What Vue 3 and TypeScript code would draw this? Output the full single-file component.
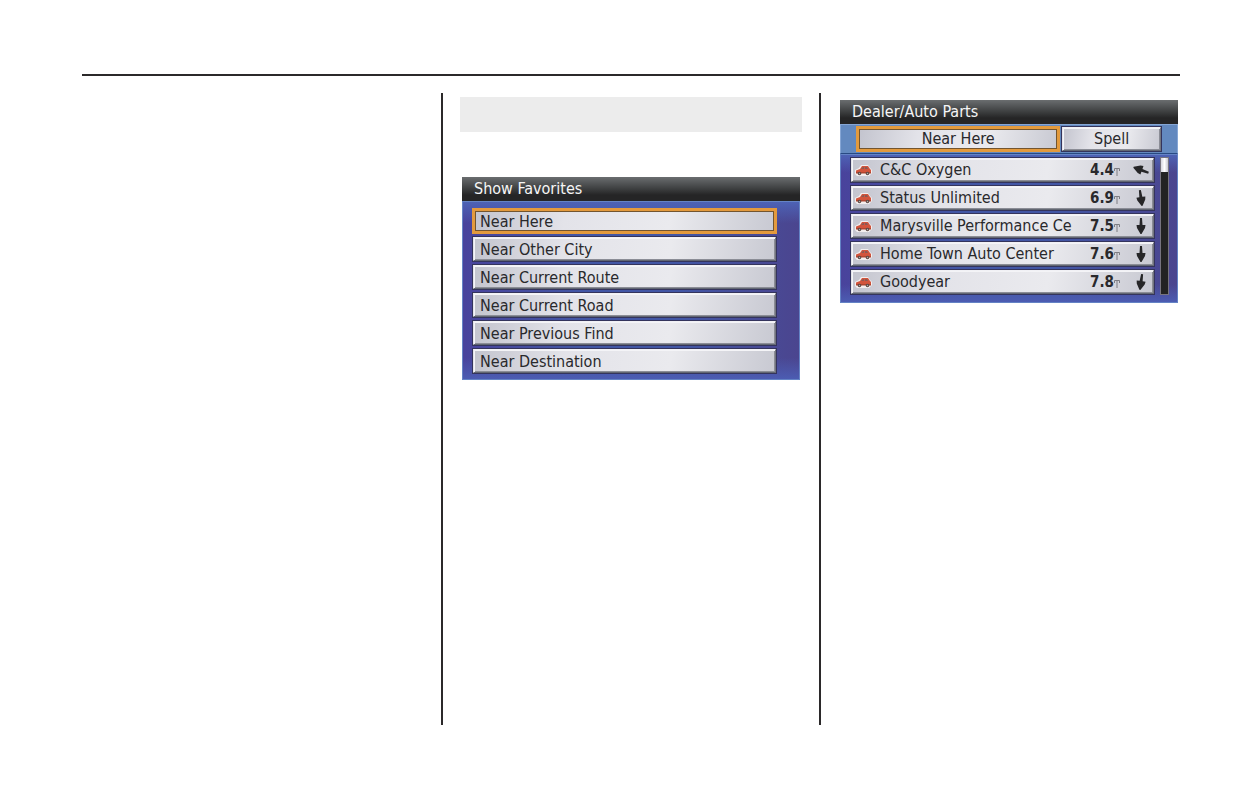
<script setup lang="ts">
interface Place {
  name: string
  distance: string
  heading: number
}

const searchAreas: string[] = [
  'Near Here',
  'Near Other City',
  'Near Current Route',
  'Near Current Road',
  'Near Previous Find',
  'Near Destination',
]

const places: Place[] = [
  { name: 'C&C Oxygen', distance: '4.4', heading: 110 },
  { name: 'Status Unlimited', distance: '6.9', heading: -8 },
  { name: 'Marysville Performance Ce', distance: '7.5', heading: 0 },
  { name: 'Home Town Auto Center', distance: '7.6', heading: 0 },
  { name: 'Goodyear', distance: '7.8', heading: 8 },
]
</script>

<template>
  <main class="page">
    <hr class="rule" />
    <div class="columns">
      <section class="column"></section>
      <section class="column middle">
        <div class="note"></div>
        <div class="screen">
          <h2 class="title">Show Favorites</h2>
          <div class="body favorites">
            <button
              v-for="(area, i) in searchAreas"
              :key="area"
              type="button"
              class="key area"
              :class="{ selected: i === 0 }"
            >{{ area }}</button>
          </div>
        </div>
      </section>
      <section class="column last">
        <div class="screen">
          <h2 class="title">Dealer/Auto Parts</h2>
          <div class="tabs">
            <button type="button" class="key tab selected">Near Here</button>
            <button type="button" class="key tab">Spell</button>
          </div>
          <div class="body results">
            <div class="list">
              <button v-for="place in places" :key="place.name" type="button" class="key place">
                <svg class="car" viewBox="0 0 17 11" aria-hidden="true">
                  <path d="M0 5L4 3L6 0H13L15 3L17 5V8L14 11H2L0 9Z" fill="#f3eeee" />
                  <path d="M1 5.5L5 4L7 1H13L15 4L16 5V8H1Z" fill="#d2543c" />
                  <path d="M6 4L8 2H9V4ZM10 2H12L13 4H10Z" fill="#8a5a55" />
                  <path d="M1 7H16V8.5H1Z" fill="#b0452f" />
                  <circle cx="4.5" cy="8.5" r="1.8" fill="#5c4a46" />
                  <circle cx="12.5" cy="8.5" r="1.8" fill="#5c4a46" />
                  <circle cx="4.5" cy="8.5" r="0.7" fill="#b9aaa6" />
                  <circle cx="12.5" cy="8.5" r="0.7" fill="#b9aaa6" />
                </svg>
                <span class="name">{{ place.name }}</span>
                <span class="distance">{{ place.distance }}</span>
                <svg class="unit" viewBox="0 0 6 8" aria-hidden="true">
                  <path d="M0.5 3V0.5H5.5V3M3 0.5V8" fill="none" stroke="#7c7c82" />
                </svg>
                <svg class="arrow" viewBox="0 0 18 18" aria-hidden="true">
                  <path
                    d="M8 1H10L10.5 8H13.5L13 11L9.5 17H8.5L5 11L4.5 8H7.5Z"
                    fill="#262628"
                    :transform="`rotate(${place.heading} 9 9)`"
                  />
                </svg>
              </button>
            </div>
            <div class="scrollbar"><div class="thumb"></div></div>
          </div>
        </div>
      </section>
    </div>
  </main>
</template>

<style>
body {
  margin: 0;
  background: #fff;
}
</style>

<style scoped>
* {
  box-sizing: border-box;
}

.page {
  display: flex;
  flex-direction: column;
  min-height: 100vh;
  padding: 74px 55px 68px 82px;
  font-family: "DejaVu Sans Condensed", "DejaVu Sans", sans-serif;
  font-size: 16px;
  line-height: 20px;
}

.rule {
  width: 100%;
  height: 2px;
  margin: 0 0 17px;
  border: 0;
  background: #2b292a;
}

.columns {
  flex: 1;
  display: grid;
  grid-template-columns: 361fr 378fr 359fr;
}

.column {
  border-right: 2px solid #2b292a;
}

.middle {
  padding: 4px 17px 0;
}

.last {
  padding: 7px 2px 0 19px;
  border-right: 0;
}

.note {
  height: 35px;
  background: #ececec;
}

.middle .screen {
  margin: 45px 2px 0;
}

.title {
  height: 24px;
  margin: 0;
  padding: 2px 12px;
  background: linear-gradient(#6a6d6f, #3c3e3f 50%, #252526 75%);
  color: #f6f6f6;
  font-size: 16px;
  font-weight: 400;
}

.body {
  border: 1px solid #6483c5;
  background:
    linear-gradient(#4d62b5, transparent 12%, transparent 88%, #4c5cb2),
    linear-gradient(90deg, #49439c, #4256a5 35%, #4256a5 65%, #4b458f);
}

.favorites {
  display: grid;
  gap: 2px;
  padding: 6px 22px 5px 9px;
}

.key {
  display: flex;
  align-items: center;
  width: 100%;
  height: 26px;
  padding: 0 6px;
  border: 2px solid;
  border-color: #f1f1f5 #73757e #626772 #e4e4ea;
  outline: 1px solid #34345c;
  outline-offset: -1px;
  background: linear-gradient(100deg, #c3c4ce, #e3e3e9 30%, #eaeaee 65%, #c8c9d2);
  color: #29292c;
  font: inherit;
  text-align: left;
  box-shadow: inset 1px 1px #f4f4f7, inset -1px -1px #8b8d96;
}

.area {
  padding-top: 2px;
}

.selected {
  border: 3px solid #e39a3d;
  padding-right: 5px;
  padding-left: 5px;
  outline: 0;
  box-shadow: inset 0 0 0 1px #73552f;
}

.tabs {
  display: grid;
  grid-template-columns: 205fr 101fr;
  gap: 1px;
  padding: 1px 15px;
  border: 1px solid #86a6d5;
  border-bottom-color: #294a83;
  background: #6389bf;
}

.tab {
  justify-content: center;
}

.results {
  display: flex;
  gap: 5px;
  padding: 2px 8px 7px 9px;
}

.list {
  flex: 1;
  min-width: 0;
  display: grid;
  gap: 2px;
}

.place {
  padding: 0 3px;
}

.car {
  flex: none;
  width: 17px;
  height: 11px;
  margin-right: 8px;
}

.name {
  flex: 1;
  min-width: 0;
  white-space: nowrap;
}

.distance {
  font-size: 15px;
  font-weight: 700;
}

.unit {
  width: 6px;
  height: 8px;
  margin: 3px 12px 0 0;
}

.arrow {
  width: 18px;
  height: 18px;
}

.scrollbar {
  width: 9px;
  border: 1px solid #77747f;
  background: #232323;
}

.thumb {
  height: 14px;
  background: linear-gradient(90deg, #d5d5de, #fff 50%, #c6c6d0);
}
</style>
